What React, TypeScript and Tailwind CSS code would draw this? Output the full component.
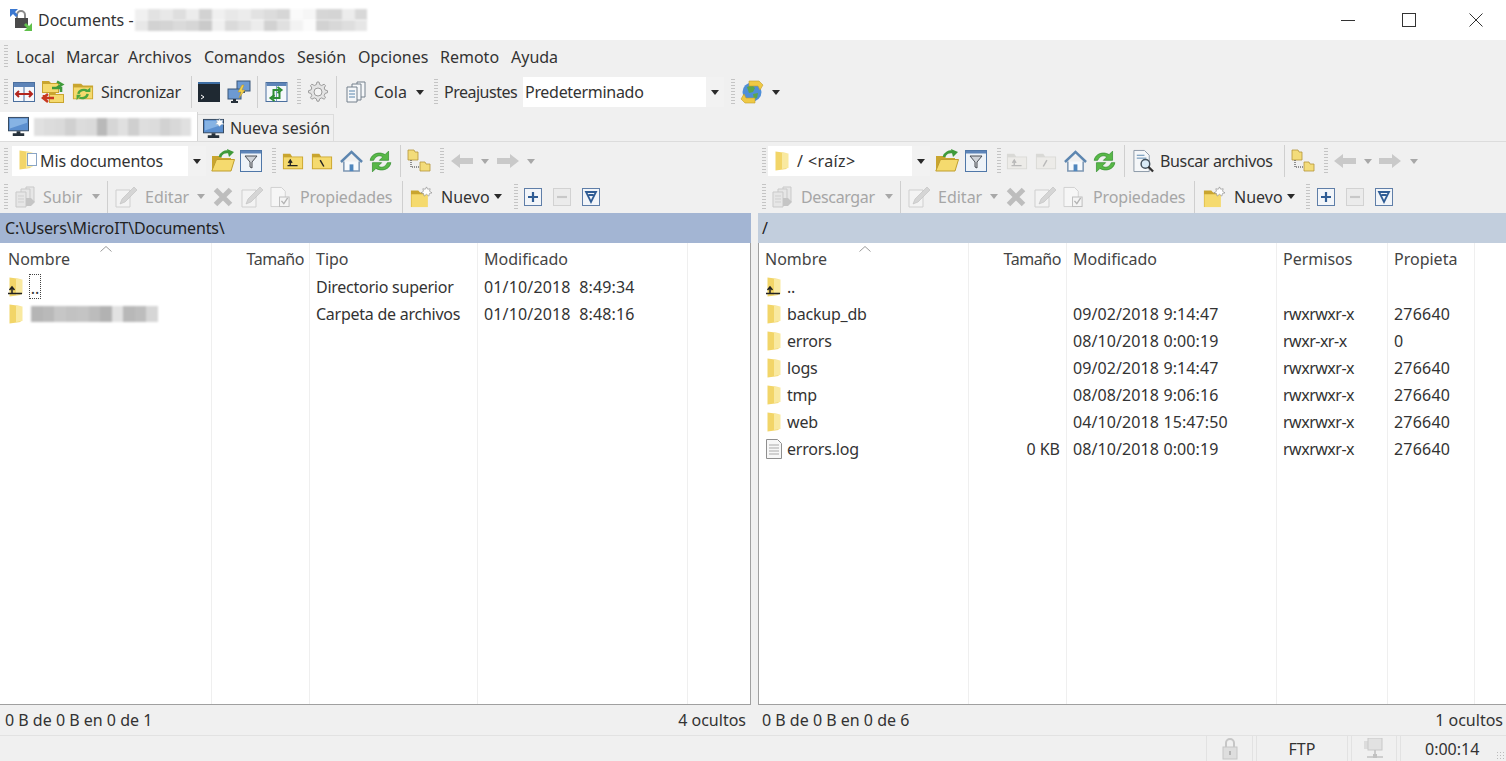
import React from "react";

type IconProps = { className?: string };

// little caret used by dropdown buttons
function Caret({ className = "", muted = false }: { className?: string; muted?: boolean }) {
  return (
    <svg viewBox="0 0 8 5" className={`w-[8px] h-[5px] shrink-0 ${className}`}>
      <path d="M0 0h8L4 5z" fill={muted ? "#a8a8a8" : "#2a2a2a"} />
    </svg>
  );
}

function Grip({ className = "", h = "h-[26px]" }: { className?: string; h?: string }) {
  return (
    <div
      className={`w-[4px] shrink-0 ${h} ${className} bg-[repeating-linear-gradient(to_bottom,#c4c4c4_0,#c4c4c4_1px,#f0f0f0_1px,#f0f0f0_3px)]`}
    />
  );
}

function Sep({ className = "" }: { className?: string }) {
  return <div className={`w-px h-[32px] shrink-0 bg-[#cfcfcf] ${className}`} />;
}

function FolderYellow({ className = "w-[22px] h-[22px]", muted = false, children }: IconProps & { muted?: boolean; children?: React.ReactNode }) {
  return (
    <svg viewBox="0 0 24 24" className={`shrink-0 ${className}`}>
      <path d="M1 4h8l2 3h12v14H1z" fill={muted ? "#d9d9d6" : "#c9a52f"} />
      <path d="M2 8h20v12H2z" fill={muted ? "#ecebe8" : "#f5da6e"} />
      {children}
    </svg>
  );
}

function ListFolder({ up = false }: { up?: boolean }) {
  return (
    <svg viewBox="0 0 16 20" className="w-[16px] h-[20px] shrink-0">
      <path d="M1.500 0.500l11 1.500v16l-11 1.500z" fill="#f2d568" />
      <path d="M8 1.500l6.500 1v14.500l-6.500 1z" fill="#f9e9a0" />
      {up && <path d="M0 16.500h14M4 16.500v-6M1.500 13L4 10l2.500 3" stroke="#222" strokeWidth="1.500" fill="none" />}
    </svg>
  );
}

function FileIcon() {
  return (
    <svg viewBox="0 0 18 22" className="w-[18px] h-[22px] shrink-0">
      <path d="M1.500 1.500h11l4 4v15h-15z" fill="#f7f7f7" stroke="#8f8f8f" />
      <path d="M4 7h10M4 10h10M4 13h10M4 16h10" stroke="#a9a9a9" />
    </svg>
  );
}

function Compare() {
  return (
    <svg viewBox="0 0 22 22" className="w-[22px] h-[22px] shrink-0">
      <rect x="0.500" y="1.500" width="21" height="19" fill="#f5f8fc" stroke="#4b6f9e" />
      <path d="M1 2h20v4H1z" fill="#5d84b8" />
      <path d="M11 6v14" stroke="#4b6f9e" />
      <path d="M3 13h16M6 10l-3 3 3 3M16 10l3 3-3 3" stroke="#b3261e" strokeWidth="2" fill="none" />
    </svg>
  );
}

function FolderSyncRed() {
  return (
    <svg viewBox="0 0 24 24" className="w-[24px] h-[24px] shrink-0">
      <path d="M1 1h7l2 2h8v10H1z" fill="#c9a52f" />
      <path d="M2 4h15v8H2z" fill="#f5da6e" />
      <path d="M8 12h6l1 2h8v9H8z" fill="#c9a52f" />
      <path d="M9 15h13v7H9z" fill="#f5da6e" />
      <path d="M11 8h9v4M16 1.500l5 3-5 3" stroke="#3f9a3a" strokeWidth="2.600" fill="none" />
      <path d="M13 18H3v-3M7 14l-5 4 5 4" stroke="#c8371f" strokeWidth="2.600" fill="none" />
    </svg>
  );
}

function FolderSyncGreen() {
  return (
    <svg viewBox="0 0 24 24" className="w-[22px] h-[22px] shrink-0">
      <path d="M1 3h9l2 2h11v15H1z" fill="#c9a52f" />
      <path d="M2 7h20v12H2z" fill="#f5da6e" />
      <path d="M7 14a6 5 0 0 1 10-3M17 14a6 5 0 0 1-9 4" stroke="#4ba63f" strokeWidth="2.600" fill="none" />
      <path d="M14 12h6V7zM10 15H5v6z" fill="#4ba63f" />
    </svg>
  );
}

function Console() {
  return (
    <svg viewBox="0 0 22 20" className="w-[22px] h-[20px] shrink-0">
      <rect width="22" height="20" fill="#1f2932" />
      <rect width="22" height="2" fill="#3e6ea3" />
      <path d="M3 13l3 2-3 2" stroke="#fff" fill="none" />
    </svg>
  );
}

function Monitor({ star = false, className = "w-[21px] h-[21px]" }: IconProps & { star?: boolean }) {
  return (
    <svg viewBox="0 0 22 22" className={`shrink-0 ${className}`}>
      <rect x="0.500" y="1.500" width="21" height="14" fill="#5b8fcf" stroke="#33475e" />
      <path d="M2 3h18v4L2 13z" fill="#86b3e4" />
      <path d="M9 16h4v2H9zM5 18h12v3H5z" fill="#26303a" />
      {star && <path d="M17 0l1.200 2.600 2.800-.6-1 2.600 2 1.900-2.800.4L17 9l-1.200-2.100L13 6.500l2-1.900-1-2.600 2.800.6z" fill="#fff" stroke="#99aabb" strokeWidth="0.500" />}
    </svg>
  );
}

function FlashMonitors() {
  return (
    <svg viewBox="0 0 24 24" className="w-[24px] h-[24px] shrink-0">
      <rect x="10" y="1" width="13" height="10" fill="#6d9ad2" stroke="#3b5778" />
      <path d="M15 11h3v2h-3z" fill="#3b5778" />
      <rect x="1" y="9" width="13" height="10" fill="#6d9ad2" stroke="#3b5778" />
      <path d="M6 19h3v2h2v2H4v-2h2z" fill="#26303a" />
      <path d="M15 5l-4 7h3l-2 6 6-8h-3l2-5z" fill="#f4d24a" stroke="#b8932a" strokeWidth="0.500" />
    </svg>
  );
}

function RefreshPanes() {
  return (
    <svg viewBox="0 0 22 22" className="w-[23px] h-[22px] shrink-0">
      <rect x="0.500" y="1.500" width="21" height="19" fill="#f4f8fb" stroke="#4b6f9e" />
      <path d="M1 2h20v3H1z" fill="#5d84b8" />
      <path d="M11 5v15" stroke="#7f9cc0" />
      <path d="M8 17V9h6M12 6l4 3-4 3" stroke="#2f8d35" strokeWidth="2" fill="none" />
      <path d="M14 10v7H7M9 14l-4 3 4 3" stroke="#2f8d35" strokeWidth="2" fill="none" />
    </svg>
  );
}

function Gear() {
  return (
    <svg viewBox="0 0 22 22" className="w-[22px] h-[22px] shrink-0">
      <path d="M10 1h2l.7 2.600 2 .9 2.400-1.300 1.400 1.400-1.300 2.400.9 2 2.400.7v2l-2.400.7-.9 2 1.300 2.400-1.400 1.400-2.400-1.300-2 .9-.7 2.400h-2l-.7-2.400-2-.9-2.400 1.300-1.400-1.400 1.300-2.400-.9-2-2.400-.7v-2l2.400-.7.9-2-1.300-2.400 1.400-1.400 2.400 1.300 2-.9z" fill="#e4e4e4" stroke="#9c9c9c" />
      <circle cx="11" cy="11" r="4" fill="#f4f4f4" stroke="#9c9c9c" />
    </svg>
  );
}

function Docs({ muted = false, className = "w-[22px] h-[22px]" }: IconProps & { muted?: boolean }) {
  const stroke = muted ? "#c9c9c9" : "#74808c";
  const fill = muted ? "#e6e6e6" : "#f5f7f9";
  return (
    <svg viewBox="0 0 22 22" className={`shrink-0 ${className}`}>
      <path d="M12 1h8v15h-8z" fill={fill} stroke={stroke} />
      <path d="M7 3h9v16H7z" fill={fill} stroke={stroke} />
      <path d="M2 6h10v15H2z" fill={fill} stroke={stroke} />
      <path d="M4 10h6M4 13h6M4 16h6" stroke={muted ? "#cfcfcf" : "#5b86ad"} />
      {muted && <path d="M12 12h5l4 4-4 4h-5z" fill="#c5c5c5" />}
    </svg>
  );
}

function Globe() {
  return (
    <svg viewBox="0 0 24 24" className="w-[24px] h-[24px] shrink-0">
      <circle cx="12" cy="12" r="9.500" fill="#4f8fd8" />
      <path d="M7 7l5-2 3 3-2 4-4 1zM13 14l5-1-1 5-3 1z" fill="#5da64b" />
      <path d="M9 1h10l4 4-3 5-2-4H9z" fill="#efc945" stroke="#c29e2b" strokeWidth="0.600" />
      <path d="M15 23H5l-4-4 3-5 2 4h9z" fill="#efc945" stroke="#c29e2b" strokeWidth="0.600" />
    </svg>
  );
}

function OpenFolder() {
  return (
    <svg viewBox="0 0 24 24" className="w-[24px] h-[24px] shrink-0">
      <path d="M1 7h8l2 2h9v4H6L1 22z" fill="#c9a52f" />
      <path d="M5.500 10.500H23.500L20 22H0.800z" fill="#f5da6e" stroke="#bf9e2d" />
      <path d="M9 8c1-4 5-6 9-5" stroke="#3f9a3a" strokeWidth="2.800" fill="none" />
      <path d="M16 0l7 3-5 5z" fill="#3f9a3a" />
    </svg>
  );
}

function Filter({ className = "w-[22px] h-[22px]" }: IconProps) {
  return (
    <svg viewBox="0 0 22 22" className={`shrink-0 ${className}`}>
      <rect x="0.500" y="0.500" width="21" height="21" fill="#eef3f8" stroke="#4f77a8" />
      <path d="M1 1h20v2.500H1z" fill="#5d84b8" />
      <path d="M5 6h12l-5 6v6l-2-1v-5z" fill="#cfd3d8" stroke="#4a4f55" />
    </svg>
  );
}

function UpFolder({ muted = false, slash = false }: { muted?: boolean; slash?: boolean }) {
  const c = muted ? "#b9b9b9" : "#222";
  return (
    <FolderYellow muted={muted} className="w-[22px] h-[22px]">
      {slash ? (
        <path d="M9 18l4-7" stroke={c} strokeWidth="1.600" />
      ) : (
        <path d="M6 17h11M9 17v-5M7 14l2-3 2 3" stroke={c} strokeWidth="1.500" fill="none" />
      )}
    </FolderYellow>
  );
}

function RootFolderLeft() {
  return (
    <FolderYellow className="w-[22px] h-[22px]">
      <path d="M10 11l4 7" stroke="#222" strokeWidth="1.600" />
    </FolderYellow>
  );
}

function Home() {
  return (
    <svg viewBox="0 0 24 24" className="w-[23px] h-[23px] shrink-0">
      <path d="M4 12v10h16V12" fill="#f6f9fc" stroke="#7d97b3" strokeWidth="1.600" />
      <path d="M1 12.500L12 2l11 10.500" fill="none" stroke="#5d86b0" strokeWidth="2.600" />
      <path d="M10 15h4v7h-4z" fill="#4f86bd" />
    </svg>
  );
}

function Refresh() {
  return (
    <svg viewBox="2 2 20 20" className="w-[23px] h-[23px] shrink-0">
      <path d="M3 11C4 5 11 3 16 6l3-3v8h-8l3-3c-3-2-6-1-8 3z" fill="#58b847" stroke="#2e8a2c" strokeWidth="0.600" />
      <path d="M21 13c-1 6-8 8-13 5l-3 3v-8h8l-3 3c3 2 6 1 8-3z" fill="#58b847" stroke="#2e8a2c" strokeWidth="0.600" />
    </svg>
  );
}

function Tree() {
  return (
    <svg viewBox="0 0 24 24" className="w-[24px] h-[24px] shrink-0">
      <path d="M1 1h6l1 2h3v8H1z" fill="#f3dc7a" stroke="#b4963a" strokeWidth="0.800" />
      <path d="M13 13h5l1 2h4v7H13z" fill="#f3dc7a" stroke="#b4963a" strokeWidth="0.800" />
      <path d="M4 11v7h9" stroke="#333" strokeDasharray="1 1" fill="none" />
    </svg>
  );
}

function Arrow({ flip = false }: { flip?: boolean }) {
  return (
    <svg viewBox="0 0 22 14" className={`w-[22px] h-[14px] shrink-0 ${flip ? "-scale-x-100" : ""}`}>
      <path d="M0 7l9-7v4h13v6H9v4z" fill="#c9c9c9" />
    </svg>
  );
}

function Search() {
  return (
    <svg viewBox="0 0 24 24" className="w-[23px] h-[24px] shrink-0">
      <path d="M2 1h11l5 5v17H2z" fill="#f5f7f9" stroke="#8a97a5" />
      <path d="M5 6h8M5 9h10" stroke="#5b86ad" />
      <circle cx="14" cy="15" r="4.500" fill="#d9ebf7" stroke="#44525e" strokeWidth="1.500" />
      <path d="M17 18l5 5" stroke="#333" strokeWidth="2.400" />
    </svg>
  );
}

function Pencil() {
  return (
    <svg viewBox="0 0 22 22" className="w-[22px] h-[22px] shrink-0">
      <path d="M1 4h14v17H1z" fill="#f3f3f3" stroke="#cfcfcf" />
      <path d="M19 1l3 3L10 16l-5 2 2-5z" fill="#d5d5d5" stroke="#bdbdbd" strokeWidth="0.600" />
    </svg>
  );
}

function CrossMark() {
  return (
    <svg viewBox="0 0 20 20" className="w-[20px] h-[20px] shrink-0">
      <path d="M2.500 2.500l15 15M17.500 2.500l-15 15" stroke="#bdbdbd" strokeWidth="5" />
    </svg>
  );
}

function Props() {
  return (
    <svg viewBox="0 0 22 22" className="w-[21px] h-[22px] shrink-0">
      <path d="M1 1h11l4 4v16H1z" fill="#f6f6f6" stroke="#d0d0d0" />
      <rect x="10" y="11" width="10" height="10" fill="#f4f4f4" stroke="#bcbcbc" />
      <path d="M12 15l2.500 3 4-6" stroke="#b3b3b3" strokeWidth="1.400" fill="none" />
    </svg>
  );
}

function NewFolder() {
  return (
    <svg viewBox="0 0 24 24" className="w-[22px] h-[22px] shrink-0">
      <path d="M1 5h8l2 2h7v16H1z" fill="#c9a52f" />
      <path d="M1.500 9h18v14h-18z" fill="#f5da6e" />
      <path d="M18 1l1.300 2.500 2.700-.5-.7 2.700L24 7.500l-2.700.6L20.500 11 18 9l-2.500 2-.8-2.900L12 7.500l2.700-1.800L14 3l2.700.5z" fill="#fff" stroke="#8c8c8c" strokeWidth="0.700" />
    </svg>
  );
}

function BoxButton({ kind }: { kind: "plus" | "minus" | "filter" }) {
  const muted = kind === "minus";
  return (
    <svg viewBox="0 0 18 18" className="w-[18px] h-[18px] shrink-0">
      <rect x="0.500" y="0.500" width="17" height="17" fill={muted ? "#ebebeb" : "#f2f5f9"} stroke={muted ? "#d2d2d2" : "#5f7ea8"} />
      {kind === "plus" && <path d="M9 4v10M4 9h10" stroke="#2f5c94" strokeWidth="2.200" />}
      {kind === "minus" && <path d="M4 9h10" stroke="#c8c8c8" strokeWidth="2.200" />}
      {kind === "filter" && <path d="M4 4h10L9 14z M6.500 7h5" fill="none" stroke="#2f5c94" strokeWidth="1.800" />}
    </svg>
  );
}

function Lock() {
  return (
    <svg viewBox="0 0 16 22" className="w-[16px] h-[22px] shrink-0">
      <path d="M4 9V5a4 4 0 0 1 8 0v4" fill="none" stroke="#c6c6c6" strokeWidth="2" />
      <rect x="1" y="9" width="14" height="12" fill="#dedede" stroke="#c6c6c6" />
      <rect x="7" y="13" width="2" height="4" fill="#b4b4b4" />
    </svg>
  );
}

function Network() {
  return (
    <svg viewBox="0 0 20 22" className="w-[20px] h-[22px] shrink-0">
      <rect x="0" y="3" width="8" height="8" fill="#dcdcdc" />
      <rect x="4" y="0" width="14" height="12" fill="#e2e2e2" stroke="#c8c8c8" />
      <path d="M11 12v6M3 19h16" stroke="#c2c2c2" strokeWidth="1.600" />
      <rect x="9" y="16" width="4" height="4" fill="#c2c2c2" />
    </svg>
  );
}

// pixelated patches standing in for the censored names
function Mosaic({ cells, className = "" }: { cells: string[]; className?: string }) {
  return (
    <div className={`flex shrink-0 blur-[1px] ${className}`}>
      {cells.map((c, i) => (
        <div key={i} className={`flex-1 h-full ${c}`} />
      ))}
    </div>
  );
}

const titleTop = ["bg-[#f0f0f0]", "bg-[#e2e2e2]", "bg-[#e8e8e8]", "bg-[#dedede]", "bg-[#ececec]", "bg-[#d2d2d2]", "bg-[#f0f0f0]", "bg-[#e8e8e8]", "bg-[#ececec]", "bg-[#e2e2e2]", "bg-[#dcdcdc]", "bg-[#d6d6d6]", "bg-[#fafafa]", "bg-[#f6f6f6]", "bg-[#d6d6d6]", "bg-[#d4d4d4]", "bg-[#ececec]", "bg-[#d8d8d8]"];
const titleBottom = ["bg-[#e8e8e8]", "bg-[#d2d2d2]", "bg-[#d4d4d4]", "bg-[#dadada]", "bg-[#d6d6d6]", "bg-[#cacaca]", "bg-[#f0f0f0]", "bg-[#dadada]", "bg-[#e2e2e2]", "bg-[#ececec]", "bg-[#d2d2d2]", "bg-[#e0e0e0]", "bg-[#f2f2f2]", "bg-[#fbfbfb]", "bg-[#d2d2d2]", "bg-[#d8d8d8]", "bg-[#dedede]", "bg-[#e6e6e6]"];
const tabCells = ["bg-[#e0e0e0]", "bg-[#dcdcdc]", "bg-[#dadada]", "bg-[#d0d0d0]", "bg-[#dcdcdc]", "bg-[#dadada]", "bg-[#b9b9b9]", "bg-[#d6d6d6]", "bg-[#e0e0e0]", "bg-[#cfcfcf]", "bg-[#dedede]", "bg-[#dcdcdc]", "bg-[#d2d2d2]", "bg-[#d8d8d8]", "bg-[#e0e0e0]"];
const rowCells = ["bg-[#b5b5b5]", "bg-[#b9b9b9]", "bg-[#c6c6c6]", "bg-[#c2c2c2]", "bg-[#c4c4c4]", "bg-[#bcbcbc]", "bg-[#b2b2b2]", "bg-[#e2e2e2]", "bg-[#b8b8b8]", "bg-[#bdbdbd]", "bg-[#d6d6d6]"];

function MenuBar() {
  const items = [
    ["Local", "w-[50px]"],
    ["Marcar", "w-[62px]"],
    ["Archivos", "w-[76px]"],
    ["Comandos", "w-[93px]"],
    ["Sesión", "w-[61px]"],
    ["Opciones", "w-[82px]"],
    ["Remoto", "w-[71px]"],
    ["Ayuda", "w-[60px]"],
  ];
  return (
    <div className="h-[32px] bg-[#f0f0f0] flex items-center pl-[4px]">
      <Grip h="h-[22px]" />
      <div className="flex ml-[8px] pt-[2px]">
        {items.map(([label, w]) => (
          <span key={label} className={`${w} whitespace-nowrap`}>
            {label}
          </span>
        ))}
      </div>
    </div>
  );
}

function MainToolbar() {
  return (
    <div className="h-[40px] bg-[#f0f0f0] flex items-center pl-[4px]">
      <Grip />
      <div className="ml-[5px]"><Compare /></div>
      <div className="ml-[6px]"><FolderSyncRed /></div>
      <div className="ml-[7px]"><FolderSyncGreen /></div>
      <span className="ml-[7px] w-[80px] whitespace-nowrap tracking-[-0.35px]">Sincronizar</span>
      <Sep className="ml-[10px]" />
      <div className="ml-[6px]"><Console /></div>
      <div className="ml-[7px]"><FlashMonitors /></div>
      <Sep className="ml-[6px]" />
      <div className="ml-[7px]"><RefreshPanes /></div>
      <Grip className="ml-[9px]" />
      <div className="ml-[6px]"><Gear /></div>
      <Sep className="ml-[7px]" />
      <div className="ml-[8px]"><Docs /></div>
      <span className="ml-[7px] w-[33px] whitespace-nowrap">Cola</span>
      <Caret className="ml-[9px]" />
      <Grip className="ml-[10px]" />
      <span className="ml-[6px] w-[73px] whitespace-nowrap tracking-[-0.5px]">Preajustes</span>
      <div className="ml-[6px] w-[201px] h-[30px] bg-white flex items-center">
        <span className="ml-[2px] flex-1 whitespace-nowrap tracking-[-0.3px]">Predeterminado</span>
        <div className="w-[18px] h-full bg-[#f2f2f2] flex items-center justify-center">
          <Caret />
        </div>
      </div>
      <Grip className="ml-[7px]" />
      <div className="ml-[5px]"><Globe /></div>
      <Caret className="ml-[8px]" />
    </div>
  );
}

function TabBar() {
  return (
    <div className="h-[30px] bg-[#f0f0f0] border-b border-[#dcdcdc] flex items-end">
      <div className="w-[198px] h-[29px] bg-white border-r border-[#d5d5d5] flex items-center pl-[8px]">
        <Monitor />
        <Mosaic cells={tabCells} className="ml-[5px] w-[157px] h-[18px]" />
      </div>
      <div className="w-[136px] h-[27px] border-r border-t border-[#dcdcdc] flex items-center pl-[5px]">
        <Monitor star />
        <span className="ml-[6px] whitespace-nowrap">Nueva sesión</span>
      </div>
    </div>
  );
}

function LeftBars() {
  return (
    <>
      <div className="h-[38px] flex items-center pl-[4px]">
        <Grip />
        <div className="ml-[4px] w-[194px] h-[30px] bg-white flex items-center">
          <div className="relative ml-[6px] w-[19px] h-[22px] shrink-0">
            <ListFolder />
            <div className="absolute right-0 top-[3px] w-[10px] h-[13px] bg-white border border-[#8aa5c4]" />
          </div>
          <span className="ml-[3px] flex-1 whitespace-nowrap tracking-[-0.1px]">Mis documentos</span>
          <div className="w-[18px] h-full bg-[#f2f2f2] flex items-center justify-center"><Caret /></div>
        </div>
        <div className="ml-[5px]"><OpenFolder /></div>
        <div className="ml-[5px]"><Filter /></div>
        <Grip className="ml-[10px]" />
        <div className="ml-[6px]"><UpFolder /></div>
        <div className="ml-[7px]"><RootFolderLeft /></div>
        <div className="ml-[7px]"><Home /></div>
        <div className="ml-[6px]"><Refresh /></div>
        <Sep className="ml-[8px]" />
        <div className="ml-[6px]"><Tree /></div>
        <Grip className="ml-[9px]" />
        <div className="ml-[7px]"><Arrow /></div>
        <Caret muted className="ml-[8px]" />
        <div className="ml-[8px]"><Arrow flip /></div>
        <Caret muted className="ml-[8px]" />
      </div>
      <div className="h-[33px] flex items-center pl-[4px] text-[#a6a6a6]">
        <Grip />
        <div className="ml-[6px]"><Docs muted /></div>
        <span className="ml-[7px] w-[40px] whitespace-nowrap">Subir</span>
        <Caret muted className="ml-[9px]" />
        <Sep className="ml-[7px]" />
        <div className="ml-[7px]"><Pencil /></div>
        <span className="ml-[8px] w-[43px] whitespace-nowrap">Editar</span>
        <Caret muted className="ml-[9px]" />
        <div className="ml-[8px]"><CrossMark /></div>
        <div className="ml-[8px]"><Pencil /></div>
        <div className="ml-[7px]"><Props /></div>
        <span className="ml-[9px] w-[93px] whitespace-nowrap tracking-[-0.15px]">Propiedades</span>
        <Sep className="ml-[9px]" />
        <div className="ml-[7px]"><NewFolder /></div>
        <span className="ml-[9px] w-[48px] whitespace-nowrap text-[#333]">Nuevo</span>
        <Caret className="ml-[5px]" />
        <Grip className="ml-[12px]" />
        <div className="ml-[6px]"><BoxButton kind="plus" /></div>
        <div className="ml-[11px]"><BoxButton kind="minus" /></div>
        <div className="ml-[11px]"><BoxButton kind="filter" /></div>
      </div>
    </>
  );
}

function RightBars() {
  return (
    <>
      <div className="h-[38px] flex items-center pl-[4px]">
        <Grip />
        <div className="ml-[2px] w-[162px] h-[30px] bg-white flex items-center">
          <div className="ml-[6px]"><ListFolder /></div>
          <span className="ml-[7px] flex-1 whitespace-nowrap tracking-[0.4px]">/ &lt;raíz&gt;</span>
          <div className="w-[18px] h-full bg-[#f2f2f2] flex items-center justify-center"><Caret /></div>
        </div>
        <div className="ml-[5px]"><OpenFolder /></div>
        <div className="ml-[6px]"><Filter /></div>
        <Grip className="ml-[10px]" />
        <div className="ml-[5px]"><UpFolder muted /></div>
        <div className="ml-[7px]"><UpFolder muted slash /></div>
        <div className="ml-[7px]"><Home /></div>
        <div className="ml-[6px]"><Refresh /></div>
        <Sep className="ml-[8px]" />
        <div className="ml-[7px]"><Search /></div>
        <span className="ml-[5px] w-[115px] whitespace-nowrap tracking-[-0.35px]">Buscar archivos</span>
        <Sep className="ml-[9px]" />
        <div className="ml-[6px]"><Tree /></div>
        <Grip className="ml-[9px]" />
        <div className="ml-[6px]"><Arrow /></div>
        <Caret muted className="ml-[8px]" />
        <div className="ml-[7px]"><Arrow flip /></div>
        <Caret muted className="ml-[9px]" />
      </div>
      <div className="h-[33px] flex items-center pl-[4px] text-[#a6a6a6]">
        <Grip />
        <div className="ml-[5px]"><Docs muted /></div>
        <span className="ml-[8px] w-[75px] whitespace-nowrap tracking-[-0.35px]">Descargar</span>
        <Caret muted className="ml-[9px]" />
        <Sep className="ml-[7px]" />
        <div className="ml-[7px]"><Pencil /></div>
        <span className="ml-[8px] w-[43px] whitespace-nowrap">Editar</span>
        <Caret muted className="ml-[9px]" />
        <div className="ml-[8px]"><CrossMark /></div>
        <div className="ml-[8px]"><Pencil /></div>
        <div className="ml-[7px]"><Props /></div>
        <span className="ml-[9px] w-[93px] whitespace-nowrap tracking-[-0.15px]">Propiedades</span>
        <Sep className="ml-[8px]" />
        <div className="ml-[8px]"><NewFolder /></div>
        <span className="ml-[9px] w-[48px] whitespace-nowrap text-[#333]">Nuevo</span>
        <Caret className="ml-[5px]" />
        <Grip className="ml-[11px]" />
        <div className="ml-[7px]"><BoxButton kind="plus" /></div>
        <div className="ml-[11px]"><BoxButton kind="minus" /></div>
        <div className="ml-[11px]"><BoxButton kind="filter" /></div>
      </div>
    </>
  );
}

type Column = { label: string; width: string; right?: boolean; values: string[]; textClass?: string; labelClass?: string };

function TextColumn({ label, width, right, values, textClass = "", labelClass = "" }: Column) {
  return (
    <div className={`${width} shrink-0 border-r border-[#efefef] flex flex-col`}>
      <div className={`h-[30px] pt-[2px] flex items-center pl-[6px] text-[#444] ${right ? "justify-end pr-[5px]" : ""}`}>
        <span className={`whitespace-nowrap ${labelClass}`}>{label}</span>
      </div>
      {values.map((v, i) => (
        <div key={i} className={`h-[27px] flex items-center px-[6px] ${right ? "justify-end" : ""}`}>
          <span className={`whitespace-pre ${textClass}`}>{v}</span>
        </div>
      ))}
    </div>
  );
}

function NameHeader({ pad }: { pad: string }) {
  return (
    <div className={`relative h-[30px] pt-[2px] flex items-center text-[#444] ${pad}`}>
      <span>Nombre</span>
      <svg viewBox="0 0 12 6" className="absolute left-[100px] top-[3px] w-[12px] h-[6px]">
        <path d="M0.500 5.500L6 0.500l5.500 5" stroke="#9a9a9a" fill="none" />
      </svg>
    </div>
  );
}

function LeftList() {
  return (
    <div className="flex-1 flex bg-white min-h-0">
      <div className="w-[212px] shrink-0 border-r border-[#efefef] flex flex-col">
        <NameHeader pad="pl-[8px]" />
        <div className="h-[27px] flex items-center pl-[8px]">
          <ListFolder up />
          <span className="ml-[5px] w-[12px] h-[25px] border border-dotted border-[#444] flex items-end justify-center leading-[20px]">..</span>
        </div>
        <div className="h-[27px] flex items-center pl-[8px]">
          <ListFolder />
          <Mosaic cells={rowCells} className="ml-[7px] w-[127px] h-[16px]" />
        </div>
      </div>
      <TextColumn label="Tamaño" width="w-[98px]" right values={[]} labelClass="tracking-[-0.45px]" />
      <TextColumn label="Tipo" width="w-[168px]" values={["Directorio superior", "Carpeta de archivos"]} textClass="tracking-[-0.25px]" />
      <TextColumn label="Modificado" width="w-[210px]" values={["01/10/2018  8:49:34", "01/10/2018  8:48:16"]} textClass="tracking-[0.15px]" />
      <div className="flex-1" />
    </div>
  );
}

const remoteNames = ["..", "backup_db", "errors", "logs", "tmp", "web", "errors.log"];

function RightList() {
  return (
    <div className="flex-1 flex bg-white min-h-0">
      <div className="w-[210px] shrink-0 border-r border-[#efefef] flex flex-col">
        <NameHeader pad="pl-[6px]" />
        {remoteNames.map((name, i) => (
          <div key={name} className="h-[27px] flex items-center pl-[6px]">
            <div className="w-[18px] flex justify-center">
              {name === "errors.log" ? <FileIcon /> : <ListFolder up={i === 0} />}
            </div>
            <span className="ml-[4px] whitespace-nowrap tracking-[-0.2px]">{name}</span>
          </div>
        ))}
      </div>
      <TextColumn label="Tamaño" width="w-[98px]" right values={["", "", "", "", "", "", "0 KB"]} labelClass="tracking-[-0.45px]" />
      <TextColumn
        label="Modificado"
        width="w-[210px]"
        textClass="tracking-[0.1px]"
        values={["", "09/02/2018 9:14:47", "08/10/2018 0:00:19", "09/02/2018 9:14:47", "08/08/2018 9:06:16", "04/10/2018 15:47:50", "08/10/2018 0:00:19"]}
      />
      <TextColumn
        label="Permisos"
        width="w-[111px]"
        textClass="tracking-[-0.5px]"
        values={["", "rwxrwxr-x", "rwxr-xr-x", "rwxrwxr-x", "rwxrwxr-x", "rwxrwxr-x", "rwxrwxr-x"]}
      />
      <TextColumn
        label="Propieta"
        width="w-[87px]"
        textClass="tracking-[0.2px]"
        values={["", "276640", "0", "276640", "276640", "276640", "276640"]}
      />
      <div className="flex-1" />
    </div>
  );
}

export default function App() {
  return (
    <div className="w-screen h-screen overflow-hidden flex flex-col bg-[#f0f0f0] text-[#333] text-[16px] leading-[22px] [font-family:'Noto_Sans',sans-serif]">
      {/* window title */}
      <div className="h-[40px] shrink-0 bg-white flex items-center">
        <svg viewBox="0 0 22 22" className="ml-[10px] w-[22px] h-[22px] shrink-0">
          <path d="M4 8V5a4 4 0 0 1 8 0v3" transform="translate(3 1)" fill="none" stroke="#8a8a8a" strokeWidth="2" />
          <rect x="5" y="9" width="13" height="10" fill="#4a4a4a" />
          <path d="M0 0h8L5 3l3 3-2 2-3-3-3 3z" fill="#3b78d0" />
          <path d="M22 22h-8l3-3-3-3 2-2 3 3 3-3z" fill="#5fc04a" />
        </svg>
        <span className="ml-[6px] whitespace-nowrap">Documents -</span>
        <div className="ml-[1px] w-[233px] h-[22px] flex flex-col shrink-0">
          <Mosaic cells={titleTop} className="h-[11px] w-full" />
          <Mosaic cells={titleBottom} className="h-[11px] w-full" />
        </div>
        <div className="flex-1" />
        <div className="w-[14px] h-px bg-[#333]" />
        <div className="ml-[47px] w-[14px] h-[14px] border border-[#333]" />
        <svg viewBox="0 0 14 14" className="ml-[53px] mr-[23px] w-[14px] h-[14px]">
          <path d="M0.500 0.500l13 13M13.500 0.500l-13 13" stroke="#333" />
        </svg>
      </div>

      <MenuBar />
      <MainToolbar />
      <TabBar />

      {/* two panes */}
      <div className="flex-1 min-h-0 flex">
        <div className="w-[751px] shrink-0 flex flex-col">
          <div className="flex flex-col shrink-0 h-[71px]"><LeftBars /></div>
          <div className="h-[30px] shrink-0 bg-[#a3b5d3] flex items-center pl-[5px] text-[#222] tracking-[-0.15px]">C:\Users\MicroIT\Documents\</div>
          <div className="flex-1 min-h-0 flex border-r border-[#a0a0a0] border-b"><LeftList /></div>
          <div className="h-[30px] shrink-0 flex items-center justify-between pl-[5px] pr-[5px]">
            <span>0 B de 0 B en 0 de 1</span>
            <span>4 ocultos</span>
          </div>
        </div>
        <div className="w-[7px] shrink-0" />
        <div className="flex-1 min-w-0 flex flex-col">
          <div className="flex flex-col shrink-0 h-[71px]"><RightBars /></div>
          <div className="h-[30px] shrink-0 bg-[#c2cedd] flex items-center pl-[4px] text-[#222]">/</div>
          <div className="flex-1 min-h-0 flex border-l border-[#a0a0a0] border-b"><RightList /></div>
          <div className="h-[30px] shrink-0 flex items-center justify-between pl-[4px] pr-[3px]">
            <span>0 B de 0 B en 0 de 6</span>
            <span>1 ocultos</span>
          </div>
        </div>
      </div>

      {/* status bar */}
      <div className="h-[26px] shrink-0 flex items-center justify-end border-t border-[#e2e2e2]">
        <div className="w-[47px] h-full border-l border-r border-[#e2e2e2] flex items-center justify-center"><Lock /></div>
        <div className="ml-[3px] w-[92px] h-full border-r border-l border-[#e2e2e2] flex items-center justify-center">FTP</div>
        <div className="ml-[3px] w-[46px] h-full border-r border-l border-[#e2e2e2] flex items-center justify-center"><Network /></div>
        <div className="ml-[3px] w-[106px] h-full relative flex items-center pl-[24px] border-l border-[#e2e2e2]">
          0:00:14
          <div className="absolute right-0 bottom-0 w-[10px] h-[10px] bg-[radial-gradient(#bbbbbb_1px,transparent_1px)] bg-[length:3px_3px]" />
        </div>
      </div>
    </div>
  );
}
